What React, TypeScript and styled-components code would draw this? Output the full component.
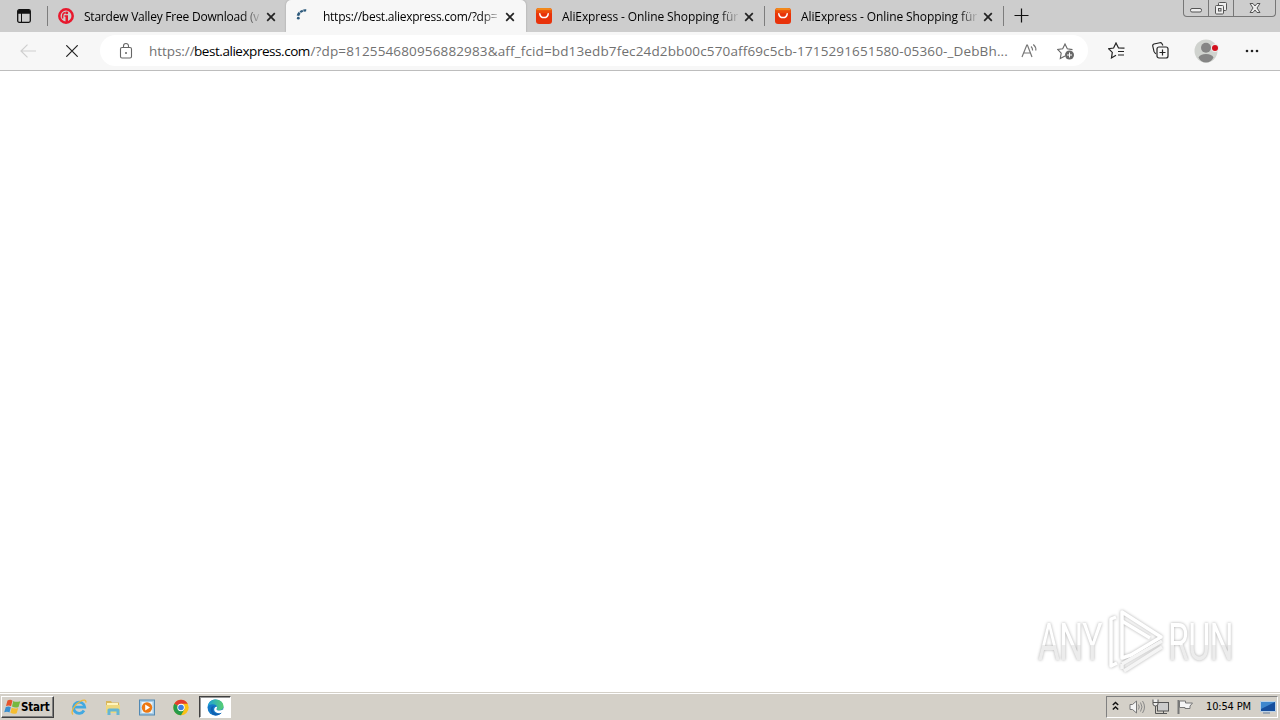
import React from 'react'
import styled, { createGlobalStyle } from 'styled-components'

const GlobalStyle = createGlobalStyle`
  * { box-sizing: border-box; }
  body {
    margin: 0;
    background: #fff;
    overflow: hidden;
    font-family: "Open Sans", "Noto Sans", sans-serif;
  }
  svg { display: block; flex: none; }
`

const Screen = styled.div`
  display: flex;
  flex-direction: column;
  width: 1280px;
  height: 720px;
`

const TabStrip = styled.div`
  display: flex;
  height: 32px;
  background: #cdcdcd;
`

const TabMenu = styled.div`
  width: 47px;
  padding: 9px 0 0 17px;
`

const Divider = styled.div`
  width: 1px;
  height: 20px;
  margin-top: 6px;
  background: #7d7d7d;
`

const Tab = styled.div<{ $width: number; $active?: boolean; $pad?: number }>`
  display: flex;
  align-items: center;
  width: ${p => p.$width}px;
  height: 32px;
  padding-left: ${p => p.$pad ?? 10}px;
  background: ${p => p.$active ? '#f7f7f7' : 'transparent'};
  border-radius: ${p => p.$active ? '5px 5px 0 0' : '0'};
  box-shadow: ${p => p.$active ? '0 0 2px #999' : 'none'};
`

const TabTitle = styled.div<{ $spacing: number; $gap?: number }>`
  width: 176px;
  margin-left: ${p => p.$gap ?? 9}px;
  padding-top: 1px;
  white-space: nowrap;
  font-size: 12px;
  line-height: 20px;
  color: #000;
  letter-spacing: ${p => p.$spacing}px;
  -webkit-mask-image: linear-gradient(90deg, #000 158px, transparent 178px);
  mask-image: linear-gradient(90deg, #000 158px, transparent 178px);
`

const TabClose = styled.div`
  margin: 1px 0 0 5px;
`

const NewTab = styled.div`
  padding: 8px 0 0 10px;
`

const WindowButtons = styled.div`
  display: flex;
  height: 17px;
  margin: 0 4px 0 auto;
  border: 1px solid #777;
  border-top: none;
  border-radius: 0 0 4px 4px;
`

const WindowButton = styled.div<{ $width: number }>`
  display: flex;
  justify-content: center;
  width: ${p => p.$width}px;
  & + & { border-left: 1px solid #777; }
`

const Toolbar = styled.div`
  display: flex;
  align-items: center;
  height: 39px;
  padding: 0 0 1px 20px;
  background: #f7f7f7;
  border-bottom: 1px solid #bdbdbd;
`

const NavIcon = styled.div<{ $left?: number }>`
  margin-left: ${p => p.$left ?? 0}px;
`

const AddressBar = styled.div`
  display: flex;
  align-items: center;
  width: 988px;
  height: 31px;
  margin-left: 22px;
  padding-left: 18px;
  border-radius: 16px;
  background: #fff;
`

const Address = styled.div`
  display: flex;
  width: 873px;
  padding-left: 15px;
  white-space: nowrap;
  font-size: 13.5px;
  line-height: 20px;
`

const AddressPart = styled.span<{ $width: number; $spacing: number; $dark?: boolean }>`
  width: ${p => p.$width}px;
  flex: none;
  letter-spacing: ${p => p.$spacing}px;
  color: ${p => p.$dark ? '#000' : '#717171'};
`

const Page = styled.main`
  display: flex;
  justify-content: flex-end;
  align-items: flex-end;
  flex: 1;
  padding: 0 42px 18px 0;
  background: #fff;
`

const Watermark = styled.div`
  display: flex;
  align-items: center;
  width: 200px;
  height: 66px;
  filter: drop-shadow(0 0 1.5px rgba(0, 0, 0, 0.32));
`

const Squeeze = styled.div<{ $scale: number }>`
  flex: none;
  width: 66px;
  margin-top: 4px;
  transform: scaleX(${p => p.$scale});
  transform-origin: left;
`

const WatermarkWord = styled.div`
  width: max-content;
  font-family: Roboto, sans-serif;
  font-size: 51px;
  line-height: 60px;
  letter-spacing: -1px;
  color: transparent;
  background: linear-gradient(#fff 53%, #ececec 54%);
  background-clip: text;
  -webkit-background-clip: text;
  white-space: nowrap;
`

const Taskbar = styled.footer`
  display: flex;
  align-items: center;
  height: 28px;
  padding: 1px 2px 0 1px;
  background: #d4d0c8;
  border-top: 1px solid #d4d0c8;
  box-shadow: inset 0 1px #fff;
`

const StartButton = styled.div`
  display: flex;
  align-items: center;
  width: 53px;
  height: 22px;
  padding-left: 2px;
  border: 1px solid;
  border-color: #fff #404040 #404040 #fff;
  box-shadow: inset -1px -1px #808080;
  font: bold 11.5px/18px "DejaVu Sans Condensed", "DejaVu Sans", sans-serif;
  letter-spacing: -0.2px;
  color: #000;
`

const Shortcuts = styled.div`
  display: flex;
  gap: 18px;
  margin-left: 17px;
`

const RunningApp = styled.div`
  display: flex;
  align-items: center;
  justify-content: center;
  width: 32px;
  height: 22px;
  margin-left: 10px;
  background: #fff;
  border: 1px solid;
  border-color: #404040 #fff #fff #404040;
  box-shadow: inset 1px 1px #999;
`

const Tray = styled.div`
  display: flex;
  align-items: center;
  width: 172px;
  height: 22px;
  margin-left: auto;
  padding-left: 5px;
  border: 1px solid;
  border-color: #808080 #fff #fff #808080;
`

const Clock = styled.div`
  width: 54px;
  margin-left: 12px;
  font: 11px/18px "DejaVu Sans Condensed", "DejaVu Sans", sans-serif;
  letter-spacing: -0.15px;
  white-space: nowrap;
  color: #000;
`

const CloseIcon = () => (
  <svg width="12" height="12" viewBox="0 0 12 12">
    <path d="M2.2 2.2l7.6 7.6M9.8 2.2L2.2 9.8" stroke="#222" strokeWidth="1.7" />
  </svg>
)

const AliIcon = () => (
  <svg width="16" height="16" viewBox="0 0 16 16">
    <rect width="16" height="16" rx="3" fill="#e8320a" />
    <path d="M0 4V3a3 3 0 0 1 3-3h10a3 3 0 0 1 3 3v1z" fill="#f2881a" />
    <rect y="2.2" width="16" height="3" fill="#ec4a0b" />
    <path d="M3.800 5.800c.6 5 7.800 5 8.400 0" fill="none" stroke="#fff" strokeWidth="1.500" strokeLinecap="round" />
  </svg>
)

const IgIcon = () => (
  <svg width="16" height="16" viewBox="0 0 16 16">
    <circle cx="8" cy="8" r="6.700" fill="none" stroke="#e8182d" strokeWidth="2.500" />
    <path d="M4.600 10.500V8.200Q4.600 5 7.500 4.600" fill="none" stroke="#e8182d" strokeWidth="1.500" />
    <circle cx="8.800" cy="4.900" r="1.400" fill="#e8182d" />
    <path d="M6.500 7.200h3.500V15H7.500V8.800h-1z" fill="#e8182d" />
  </svg>
)

const EdgeIcon = () => (
  <svg width="17" height="17" viewBox="0 0 17 17">
    <defs>
      <linearGradient id="edgeTop" x1="0" x2="1">
        <stop stopColor="#1ba2dc" />
        <stop offset="1" stopColor="#58cf70" />
      </linearGradient>
    </defs>
    <circle cx="8.500" cy="8.500" r="8" fill="#1479c9" />
    <path d="M.7 7.400C1.600 3 4.700.5 8.500.5c4.800 0 8 3.300 8 6.800 0 2.700-2 4-4.500 4-1.600 0-2.500-.6-2.500-1.100 0-.4.6-.8.6-1.900C10.100 6.500 8 5.300 5.800 5.300 3.300 5.300 1.500 6.300.7 7.400z" fill="url(#edgeTop)" />
    <path d="M7.200 7c-1.600 1.200-1.900 3.300-.8 5.200 1.100 2 4.300 3.300 8.200 1.400-1.400 2.200-4 3.200-6.500 2.900C4.800 15.500 3.300 12.500 3.700 10 4 8.200 5.400 7 7.200 7z" fill="#1060b0" />
    <path d="M9.500 10.200c0 1.200 3.500 2 6.500.3l1 1-1.600 2.100c-3.600 1.500-7.900.3-8.200-2.500C7 9 8.300 7.500 10 7.800c.2 1.400-.5 1.900-.5 2.400z" fill="#fff" />
  </svg>
)

function App() {
  return (
    <Screen>
      <GlobalStyle />
      <TabStrip>
        <TabMenu>
          <svg width="14" height="14" viewBox="0 0 14 14">
            <rect x=".7" y=".7" width="12.600" height="12.600" rx="1.500" fill="none" stroke="#111" strokeWidth="1.300" />
            <path d="M1 2q0-1 1-1h10q1 0 1 1v2.800H1z" fill="#111" />
            <path d="M4.500 4v9" stroke="#111" />
          </svg>
        </TabMenu>
        <Divider />
        <Tab $width={238}>
          <IgIcon />
          <TabTitle $spacing={-0.22} $gap={10}>Stardew Valley Free Download (v1</TabTitle>
          <TabClose><CloseIcon /></TabClose>
        </Tab>
        <Tab $width={240} $active $pad={9}>
          <svg width="16" height="16" viewBox="0 0 16 16">
            <circle cx="3.300" cy="10.200" r="1.400" fill="#2d5a7c" />
            <path d="M3 7.800q.3-1.800 1.700-3" stroke="#2d5a7c" strokeWidth="2.600" fill="none" />
            <path d="M5.200 4.200q2.800-2.200 6-1.800" stroke="#2d5a7c" strokeWidth="2.300" strokeDasharray="3 .6" fill="none" />
          </svg>
          <TabTitle $spacing={-0.26} $gap={12}>https://best.aliexpress.com/?dp=</TabTitle>
          <TabClose><CloseIcon /></TabClose>
        </Tab>
        <Tab $width={238}>
          <AliIcon />
          <TabTitle $spacing={-0.1} $gap={10}>AliExpress - Online Shopping für</TabTitle>
          <TabClose><CloseIcon /></TabClose>
        </Tab>
        <Divider />
        <Tab $width={238}>
          <AliIcon />
          <TabTitle $spacing={-0.1} $gap={10}>AliExpress - Online Shopping für</TabTitle>
          <TabClose><CloseIcon /></TabClose>
        </Tab>
        <Divider />
        <NewTab>
          <svg width="15" height="15" viewBox="0 0 15 15">
            <path d="M.5 7.500h14M7.500.5v14" stroke="#111" strokeWidth="1.200" />
          </svg>
        </NewTab>
        <WindowButtons>
          <WindowButton $width={24}>
            <svg width="24" height="16" viewBox="0 0 24 16">
              <rect x="6.500" y="8.500" width="11" height="3.500" rx="1.500" fill="#eee" stroke="#555" />
            </svg>
          </WindowButton>
          <WindowButton $width={25}>
            <svg width="16" height="16" viewBox="0 0 16 16">
              <rect x="5.500" y="2.500" width="8" height="8" rx="1" fill="#eee" stroke="#555" />
              <rect x="2.500" y="5.500" width="8" height="8.500" rx="1" fill="#eee" stroke="#555" />
              <rect x="5.500" y="8.500" width="2.500" height="2.500" fill="#ddd" stroke="#555" />
            </svg>
          </WindowButton>
          <WindowButton $width={42}>
            <svg width="14" height="16" viewBox="0 0 14 16">
              <path d="M2 3.500h3l2 2.500 2-2.500h3L9 8l3 4.500H9L7 10l-2 2.500H2L5 8z" fill="#eee" stroke="#555" />
            </svg>
          </WindowButton>
        </WindowButtons>
      </TabStrip>

      <Toolbar>
        <NavIcon>
          <svg width="16" height="14" viewBox="0 0 16 14">
            <path d="M16 7H1M7.500.6L1 7l6.500 6.400" fill="none" stroke="#cfcfcf" strokeWidth="1.200" />
          </svg>
        </NavIcon>
        <NavIcon $left={30}>
          <svg width="12" height="12" viewBox="0 0 12 12">
            <path d="M.3.3l11.400 11.400M11.700.3L.3 11.700" stroke="#222" strokeWidth="1.200" />
          </svg>
        </NavIcon>
        <AddressBar>
          <svg width="16" height="18" viewBox="0 0 16 18">
            <rect x="2.500" y="5.500" width="11" height="10.500" rx="1.500" fill="none" stroke="#666" strokeWidth="1.100" />
            <path d="M5.500 5.500V4a2.500 2.500 0 0 1 5 0v1.500" fill="none" stroke="#666" strokeWidth="1.100" />
            <circle cx="8" cy="11" r="1" fill="#666" />
          </svg>
          <Address>
            <AddressPart $width={45} $spacing={-0.05}>https://</AddressPart>
            <AddressPart $width={116.5} $spacing={-0.45} $dark>best.aliexpress.com</AddressPart>
            <AddressPart $width={696} $spacing={0.14}>/?dp=812554680956882983&amp;aff_fcid=bd13edb7fec24d2bb00c570aff69c5cb-1715291651580-05360-_DebBh...</AddressPart>
          </Address>
          <NavIcon $left={14}>
            <svg width="17" height="16" viewBox="0 0 17 16">
              <path d="M1 14L5.800 2h.6L11 14M2.600 10h6.900" fill="none" stroke="#777" strokeWidth="1.200" />
              <path d="M10 3.500q1.700 1.500 1.600 4M12.300 1.500q3 2.500 2.500 6" fill="none" stroke="#777" strokeWidth="1.200" />
            </svg>
          </NavIcon>
          <NavIcon $left={19}>
            <svg width="18" height="18" viewBox="0 0 18 18">
              <path d="M8 14l-4.700 2.500.9-5.300L.7 7.500l5-.7L8 2l2.300 4.800 5.200.8" fill="none" stroke="#666" strokeWidth="1.100" />
              <circle cx="12.500" cy="13" r="4.500" fill="#696969" />
              <path d="M12.500 10.500v5M10 13h5" stroke="#fff" />
            </svg>
          </NavIcon>
        </AddressBar>
        <NavIcon $left={20}>
          <svg width="18" height="17" viewBox="0 0 18 17">
            <path d="M16.500 6.200l-6-.2L8 1 5.600 6l-5 .7 3.700 3.700-.8 5.500L8 13.200" fill="none" stroke="#222" strokeWidth="1.200" />
            <path d="M10 9.500h6M10 13h6" stroke="#222" strokeWidth="1.200" />
          </svg>
        </NavIcon>
        <NavIcon $left={26}>
          <svg width="17" height="17" viewBox="0 0 17 17">
            <path d="M3.800 12L2 9.500.7 4q-.2-1.500 1.200-2l6-1.300q1.300-.2 2 .8l1 2" fill="none" stroke="#222" strokeWidth="1.100" />
            <rect x="5" y="5" width="11" height="11" rx="2" fill="#f7f7f7" stroke="#222" strokeWidth="1.200" />
            <path d="M10.500 7.500v6M7.500 10.500h6" stroke="#222" strokeWidth="1.200" />
          </svg>
        </NavIcon>
        <NavIcon $left={25}>
          <svg width="26" height="24" viewBox="0 0 26 24">
            <circle cx="12" cy="12" r="11.500" fill="#d0d3cf" />
            <circle cx="12" cy="8.800" r="5" fill="#858585" />
            <path d="M4.500 18.500q1.500-3.500 7.500-3.500t7.500 3.500q-2.500 5-7.500 5t-7.500-5z" fill="#858585" />
            <circle cx="21" cy="9" r="4" fill="#ececec" />
            <circle cx="21" cy="9" r="3" fill="#d3101d" />
          </svg>
        </NavIcon>
        <NavIcon $left={25}>
          <svg width="14" height="4" viewBox="0 0 14 4">
            <circle cx="2" cy="2" r="1.300" fill="#222" />
            <circle cx="7" cy="2" r="1.300" fill="#222" />
            <circle cx="12" cy="2" r="1.300" fill="#222" />
          </svg>
        </NavIcon>
      </Toolbar>

      <Page>
        <Watermark>
          <Squeeze $scale={0.66}><WatermarkWord>ANY</WatermarkWord></Squeeze>
          <svg width="64" height="66" viewBox="0 0 64 66">
            <g fill="none" stroke="#f5f5f5" strokeWidth="3.500" strokeLinejoin="round">
              <path d="M18 4L57 29 27 47 18 50z" stroke="#fff" />
              <path d="M12 9L7 11v47l6-3M18 13l28 17" stroke="#fff" />
              <path d="M18 56l40-23M20 63l38-24M18 56v5" />
            </g>
          </svg>
          <Squeeze $scale={0.665}><WatermarkWord>RUN</WatermarkWord></Squeeze>
        </Watermark>
      </Page>

      <Taskbar>
        <StartButton>
          <svg width="17" height="16" viewBox="0 0 17 16">
            <path d="M3.500 1.500q3-1.500 5 .2L7 7.300Q5 5.800 2 7z" fill="#e5532b" />
            <path d="M9.300 2q2.500 1.600 7 .2L14.500 8q-3 1.300-6.500-.4z" fill="#76b83e" />
            <path d="M1.800 8q3-1.200 5 .2l-1.300 5.300Q3.500 12 .2 13.200z" fill="#398fd0" />
            <path d="M7.700 8.700q3 1.500 6.500.2l-1.500 5.300q-3 1.300-6.300-.4z" fill="#f5bd30" />
          </svg>
          Start
        </StartButton>
        <Shortcuts>
          <svg width="16" height="17" viewBox="0 0 16 17">
            <path d="M13 11.500a5.600 5.600 0 1 1 .7-3.300H4" fill="none" stroke="#42a9e1" strokeWidth="2.800" />
            <path d="M2 15.500C-1 13 4 5 9 2.500c4-2.200 6.500-1.800 5.800 1.200" fill="none" stroke="#edb83e" strokeWidth="1.300" />
          </svg>
          <svg width="16" height="17" viewBox="0 0 16 17">
            <path d="M1 2h5l1 1.500h7V14H1z" fill="#d9b65a" />
            <path d="M2 4h11v3H2z" fill="#fff5bd" />
            <path d="M1 6h14v8H1z" fill="#eed87f" />
            <path d="M2.500 16v-5q0-1.500 1.500-1.500h9q1.500 0 1.500 1.500v5h-3v-3.500h-6V16z" fill="#65b6d4" />
          </svg>
          <svg width="16" height="17" viewBox="0 0 16 17">
            <rect x=".5" y="1" width="15" height="15" fill="#a7cce7" stroke="#5289b3" />
            <rect x="2.500" y="3" width="11" height="11" fill="#e9f4fa" />
            <circle cx="8" cy="8.500" r="5.200" fill="#ed7812" />
            <path d="M6.200 5.500L11 8.500l-4.800 3z" fill="#fff" />
          </svg>
          <svg width="16" height="17" viewBox="0 0 16 17">
            <circle cx="8" cy="8.500" r="7.700" fill="#fbc116" />
            <path d="M8 8.500L1.300 4.700A7.700 7.700 0 0 1 14.700 4.700H8z" fill="#e33b2e" />
            <path d="M1.300 4.700A7.700 7.700 0 0 0 8 16.200l3.500-6L8 8.500z" fill="#269b4a" />
            <circle cx="8" cy="8.500" r="3.700" fill="#fff" />
            <circle cx="8" cy="8.500" r="2.800" fill="#3e7de0" />
          </svg>
        </Shortcuts>
        <RunningApp><EdgeIcon /></RunningApp>
        <Tray>
          <svg width="7" height="12" viewBox="0 0 7 12">
            <path d="M.8 4l2.700-2.500L6.200 4M.8 8.500L3.500 6l2.700 2.500" fill="none" stroke="#111" strokeWidth="1.500" />
          </svg>
          <NavIcon $left={10}>
            <svg width="17" height="16" viewBox="0 0 17 16">
              <path d="M1 5.500h2.500L7.500 2v12l-4-3.500H1z" fill="#f4f4f4" stroke="#777" />
              <path d="M9.500 5.500q1.500 2.500 0 5M11.500 3.500q3 4.500 0 9M13.500 2q4 6 0 12" fill="none" stroke="#888" />
            </svg>
          </NavIcon>
          <NavIcon $left={6}>
            <svg width="18" height="16" viewBox="0 0 18 16">
              <rect x="5.500" y="3.500" width="11" height="8.500" fill="#ccc" stroke="#555" />
              <path d="M8 14.500h7M11.500 12v2M3.500 7v7.500H8" fill="none" stroke="#555" />
              <path d="M1 .5V5q0 2 2.500 2T6 5V.5M1 3.500h5" fill="#eee" stroke="#555" />
            </svg>
          </NavIcon>
          <NavIcon $left={7}>
            <svg width="17" height="16" viewBox="0 0 17 16">
              <path d="M1.500 1v14" stroke="#777" strokeWidth="2" />
              <path d="M2.500 2h6v2h7l-2.500 3 0 2.500H8V8.500H2.500z" fill="#f5f5f5" stroke="#777" />
            </svg>
          </NavIcon>
          <Clock>10:54 PM</Clock>
          <svg width="16" height="16" viewBox="0 0 16 16">
            <path d="M.5 2.500h15v10H.5z" fill="#164f9e" stroke="#b9d1e7" />
            <path d="M1 3h14L1 10z" fill="#3e87ce" />
            <path d="M3 14h7" stroke="#607da0" />
          </svg>
        </Tray>
      </Taskbar>
    </Screen>
  )
}

export default App
